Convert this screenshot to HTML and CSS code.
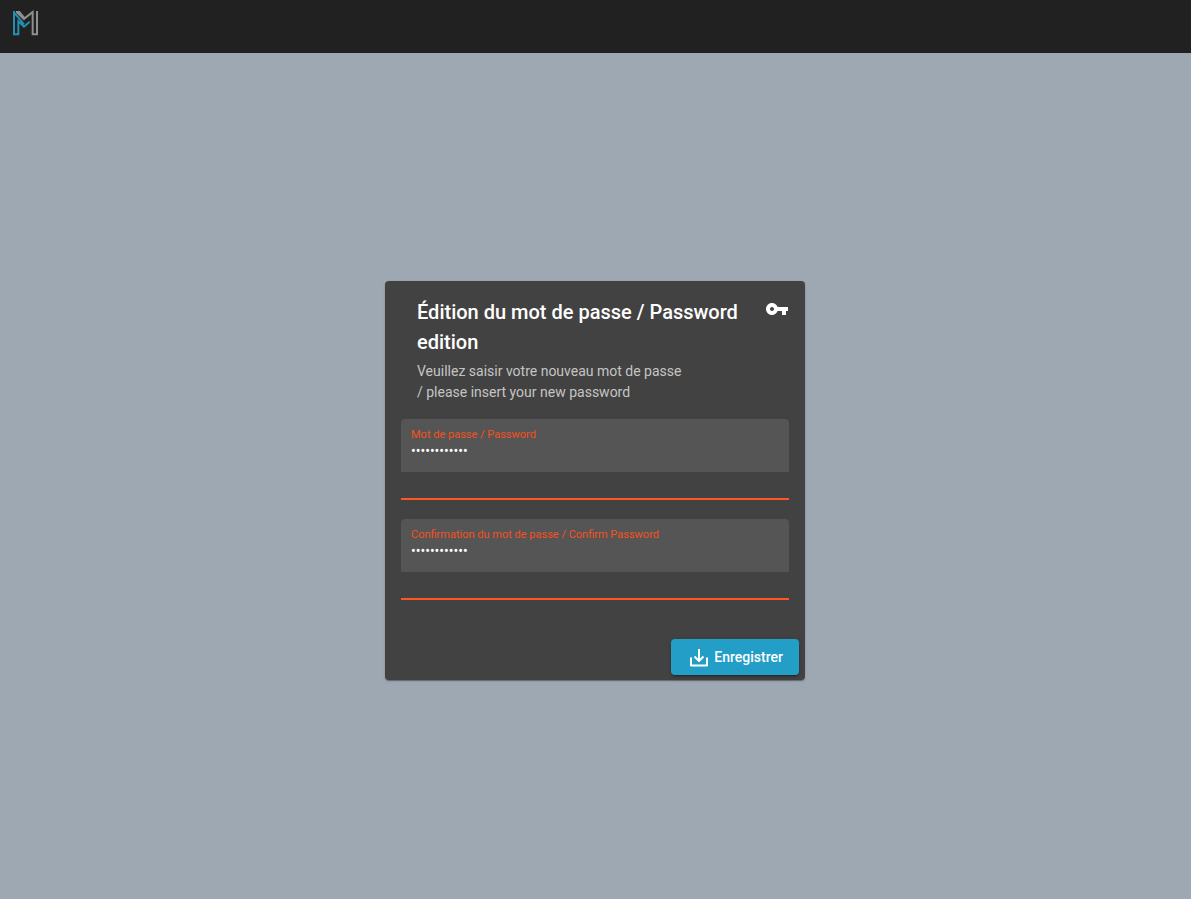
FILE: index.html
```html
<!DOCTYPE html>
<html lang="fr">
<head>
  <meta charset="utf-8">
  <meta name="viewport" content="width=device-width, initial-scale=1">
  <title>Édition du mot de passe</title>
  <link rel="stylesheet" href="styles.css">
</head>
<body>
  <header class="topbar">
    <a class="logo" href="#" aria-label="Accueil">
      <svg viewBox="0 0 81 78" width="27" height="26" fill="none" stroke-width="6" aria-hidden="true">
        <path stroke="#8f8f8f" d="M12 6H22L38 25 62 6V73H75V3M14 6L38 29"/>
        <path stroke="#2190b4" d="M6 3V73H19V34L36 50 53 35M6 7L36 43"/>
      </svg>
    </a>
  </header>
  <main class="page">
    <form class="card">
      <div class="card-header">
        <div class="heading">
          <h1 class="title">Édition du mot de passe / Password edition</h1>
          <p class="subtitle">Veuillez saisir votre nouveau mot de passe<br>/ please insert your new password</p>
        </div>
        <svg class="key" viewBox="0 0 24 24" width="24" height="24" fill="#fff" aria-hidden="true">
          <path d="M12.65 10C11.83 7.67 9.61 6 7 6c-3.310 0-6 2.690-6 6s2.690 6 6 6c2.610 0 4.830-1.670 5.650-4H17v4h4v-4h2v-4H12.650zM7 14c-1.100 0-2-.9-2-2s.9-2 2-2 2 .9 2 2-.9 2-2 2z"/>
        </svg>
      </div>
      <div class="fields">
        <div class="field">
          <div class="field-box">
            <label class="label" for="password">Mot de passe / Password</label>
            <input class="input" id="password" type="password" value="motdepasse12">
          </div>
        </div>
        <div class="field">
          <div class="field-box">
            <label class="label" for="confirm">Confirmation du mot de passe / Confirm Password</label>
            <input class="input" id="confirm" type="password" value="motdepasse12">
          </div>
        </div>
      </div>
      <div class="actions">
        <button class="save" type="button">
          <svg viewBox="0 0 24 24" width="24" height="24" fill="none" stroke="#fff" stroke-width="2" aria-hidden="true">
            <path d="M4 12.500V20.500H20V12.500M12 4V16M7.500 11.500l4.500 4.500 4.500-4.500" stroke-linejoin="round"/>
          </svg>
          <span>Enregistrer</span>
        </button>
      </div>
    </form>
  </main>
</body>
</html>
```
FILE: styles.css
```css
* {
  box-sizing: border-box;
}

body {
  display: flex;
  flex-direction: column;
  min-height: 100vh;
  margin: 0;
  background: #9ea8b2;
  color: #fff;
  font-family: Roboto, "Liberation Sans", sans-serif;
}

.topbar {
  display: flex;
  padding: 10px 12px 17px;
  background: #212121;
}

.logo,
.logo svg {
  display: block;
}

.page {
  display: flex;
  flex: 1;
  align-items: center;
  justify-content: center;
  padding: 9px 1px 0 0;
}

.card {
  width: 420px;
  max-width: 100%;
  border-radius: 4px;
  background: #424242;
  box-shadow: 0 2px 1px -1px rgba(0, 0, 0, 0.2), 0 1px 1px rgba(0, 0, 0, 0.14), 0 1px 3px rgba(0, 0, 0, 0.12);
}

.card-header {
  display: flex;
  align-items: flex-start;
  justify-content: space-between;
  padding: 16px 16px 0 32px;
}

.heading {
  flex: 1;
}

.title {
  margin: 0;
  font-size: 20px;
  font-weight: 500;
  line-height: 30px;
}

.subtitle {
  margin: 4px 0 0;
  color: rgba(255, 255, 255, 0.7);
  font-size: 14px;
  line-height: 21px;
}

.key {
  flex: none;
  margin-left: 16px;
}

.fields {
  display: grid;
  gap: 19px;
  padding: 16px 16px 0;
}

.field {
  padding-bottom: 26px;
  border-bottom: 2px solid #ff5722;
}

.field-box {
  display: flex;
  flex-direction: column;
  padding: 8px 10px 12px;
  border-radius: 4px 4px 0 0;
  background: #555;
}

.label {
  color: #f4511e;
  font-size: 11px;
  line-height: 15px;
}

.input {
  width: 100%;
  height: 18px;
  padding: 0;
  border: 0;
  outline: 0;
  background: transparent;
  color: #fff;
  font: 14px/18px Roboto, "Liberation Sans", sans-serif;
}

.actions {
  display: flex;
  justify-content: flex-end;
  padding: 39px 6px 5px;
}

.save {
  display: flex;
  align-items: center;
  gap: 3px;
  height: 36px;
  padding: 0 16px;
  border: 0;
  border-radius: 4px;
  background: #229ec7;
  box-shadow: 0 3px 1px -2px rgba(0, 0, 0, 0.2), 0 2px 2px rgba(0, 0, 0, 0.14), 0 1px 5px rgba(0, 0, 0, 0.12);
  color: #fff;
  font: 500 14px/36px Roboto, "Liberation Sans", sans-serif;
}
```
